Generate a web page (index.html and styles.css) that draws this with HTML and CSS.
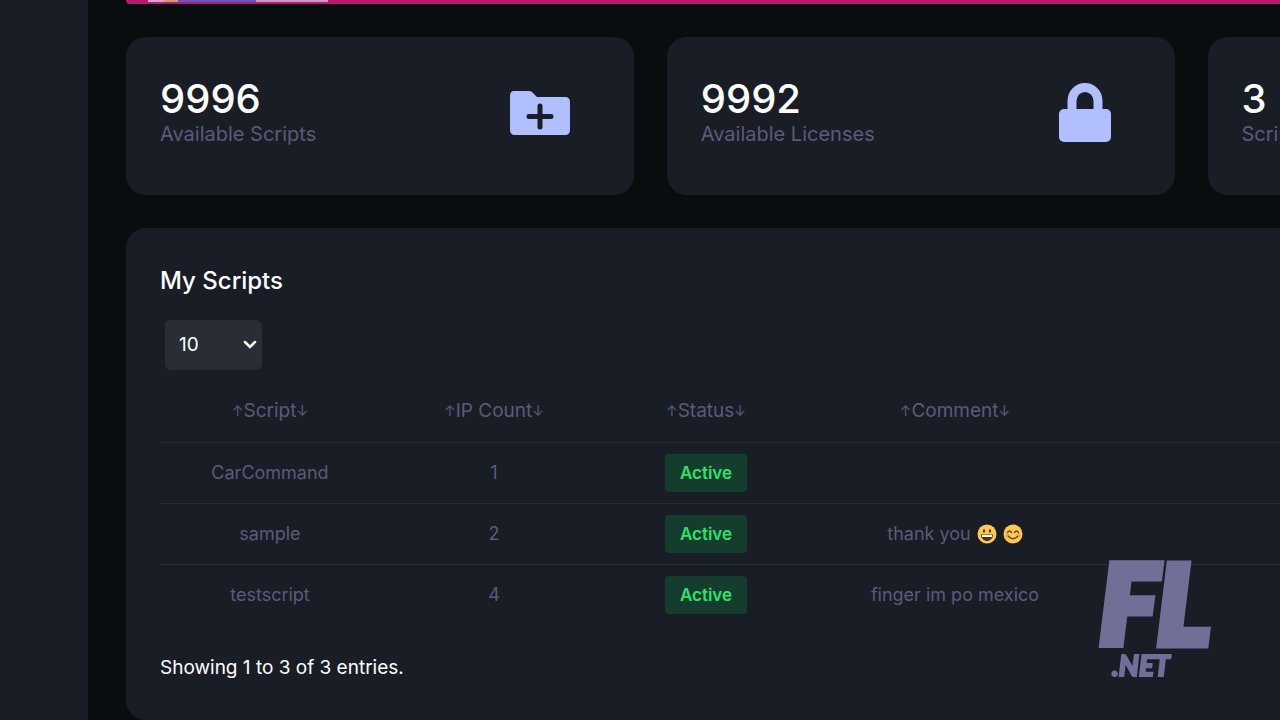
FILE: index.html
```html
<!DOCTYPE html>
<html lang="en">
<head>
<meta charset="utf-8">
<title>My Scripts</title>
<link rel="stylesheet" href="styles.css">
</head>
<body>
<div class="app">
  <aside class="sidebar"></aside>
  <main class="content">
    <div class="banner"><span class="bar bar-light"></span><span class="bar bar-gold"></span><span class="bar bar-violet"></span><span class="bar bar-pale"></span></div>
    <section class="stats">
      <article class="stat">
        <div><div class="stat-value">9996</div><div class="stat-label">Available Scripts</div></div>
        <svg class="stat-icon" viewBox="0 0 72 72" aria-hidden="true"><path fill="#b1bfff" d="M10 14h15q2 0 3 1l5 5h28q5 0 5 5v28q0 5-5 5H11q-5 0-5-5V19q0-5 4-5z"/><path d="M36 29v21M25 39.500h22" stroke="#191d26" stroke-width="5" stroke-linecap="round"/></svg>
      </article>
      <article class="stat">
        <div><div class="stat-value">9992</div><div class="stat-label">Available Licenses</div></div>
        <svg class="stat-icon" viewBox="0 0 72 72" aria-hidden="true"><path d="M27 34V24a13 13.500 0 0 1 26 0v10" fill="none" stroke="#b1bfff" stroke-width="9"/><rect x="14" y="32" width="52" height="33" rx="5" fill="#b1bfff"/></svg>
      </article>
      <article class="stat">
        <div><div class="stat-value">3</div><div class="stat-label">Scripts</div></div>
      </article>
    </section>
    <section class="panel">
      <h1 class="panel-title">My Scripts</h1>
      <div class="page-size">
        <select class="page-select" aria-label="Entries per page"><option>10</option><option>25</option><option>50</option></select>
        <svg class="chevron" viewBox="0 0 14 10" aria-hidden="true"><path d="M2 2l5 5 5-5" fill="none" stroke="#fff" stroke-width="2.500" stroke-linecap="round"/></svg>
      </div>
      <table class="scripts">
        <colgroup><col class="col-script"><col class="col-ip"><col class="col-status"><col class="col-comment"><col></colgroup>
        <thead><tr>
          <th><span class="arrow">↑</span>Script<span class="arrow">↓</span></th>
          <th><span class="arrow">↑</span>IP Count<span class="arrow">↓</span></th>
          <th><span class="arrow">↑</span>Status<span class="arrow">↓</span></th>
          <th><span class="arrow">↑</span>Comment<span class="arrow">↓</span></th>
          <th></th>
        </tr></thead>
        <tbody>
          <tr><td>CarCommand</td><td>1</td><td><span class="badge">Active</span></td><td></td><td></td></tr>
          <tr><td>sample</td><td>2</td><td><span class="badge">Active</span></td><td><span class="note">thank you
            <svg class="emoji" viewBox="0 0 20 20" role="img" aria-label="grinning face"><circle cx="10" cy="10" r="9.500" fill="#fdc94f"/><ellipse cx="7" cy="7" rx="1.200" ry="1.800" fill="#4b3520"/><ellipse cx="13" cy="7" rx="1.200" ry="1.800" fill="#4b3520"/><path d="M4 10.500h12c0 4-3 6.500-6 6.500s-6-2.500-6-6.500z" fill="#51301f"/><path d="M5 11h10v2H5z" fill="#fff"/></svg>
            <svg class="emoji" viewBox="0 0 20 20" role="img" aria-label="smiling face"><circle cx="10" cy="10" r="9.500" fill="#fdc94f"/><circle cx="4.500" cy="11.500" r="2" fill="#f4a148"/><circle cx="15.500" cy="11.500" r="2" fill="#f4a148"/><path d="M4.500 8.500q2-3 4 0M11.500 8.500q2-3 4 0M5.500 12.500q4.500 4.500 9 0" fill="none" stroke="#6b431f" stroke-width="1.400" stroke-linecap="round"/></svg></span></td><td></td></tr>
          <tr><td>testscript</td><td>4</td><td><span class="badge">Active</span></td><td>finger im po mexico</td><td></td></tr>
        </tbody>
      </table>
      <p class="summary">Showing 1 to 3 of 3 entries.</p>
    </section>
  </main>
</div>
<div class="brand"><span class="brand-main">FL</span><span class="brand-sub">.NET</span></div>
</body>
</html>
```
FILE: styles.css
```css
* { box-sizing: border-box; }
body {
  margin: 0;
  background: #0a0d10;
  color: #fff;
  font-family: Inter, "Liberation Sans", sans-serif;
  font-size: 19px;
  line-height: 24px;
  overflow: hidden;
}
.app { display: flex; min-height: 100vh; }
.sidebar { flex: 0 0 88px; background: #191d26; }
.content { flex: 1; min-width: 0; padding-left: 38px; overflow: hidden; display: flex; flex-direction: column; }
.banner {
  height: 4px;
  padding-left: 22px;
  background: #b51a6c;
  border-radius: 0 0 0 4px;
  display: flex;
  flex-shrink: 0;
}
.bar { height: 2px; }
.bar-light { width: 16px; background: #d4a5d0; }
.bar-gold { width: 14px; background: #d39a76; }
.bar-violet { width: 78px; background: #6856bb; }
.bar-pale { width: 72px; background: #ce99c5; }
.stats {
  display: grid;
  grid-auto-flow: column;
  grid-auto-columns: 44%;
  gap: 33px;
  margin-top: 33px;
}
.stat {
  display: flex;
  justify-content: space-between;
  align-items: flex-start;
  padding: 40px 58px 46px 34px;
  border-radius: 20px;
  background: #191d26;
}
.stat-value { font-size: 40px; line-height: 44px; font-weight: 500; }
.stat-label { color: #5b5b78; font-size: 20px; line-height: 26px; white-space: nowrap; }
.stat-icon { width: 72px; height: 72px; }
.panel {
  flex: 1;
  margin-top: 33px;
  padding: 37px 0 36px 34px;
  border-radius: 20px 0 0 20px;
  background: #191d26;
}
.panel-title { margin: 0; font-size: 24px; line-height: 32px; font-weight: 500; }
.page-size { position: relative; width: 97px; margin: 23px 0 11px 5px; }
.page-select {
  display: block;
  width: 100%;
  height: 50px;
  padding: 0 14px;
  border: 0;
  border-radius: 6px;
  appearance: none;
  background: #292e36;
  color: #fff;
  font: inherit;
}
.chevron { position: absolute; right: 5px; top: 20px; width: 14px; height: 10px; pointer-events: none; }
.scripts { width: 100%; table-layout: fixed; border-collapse: collapse; color: #5b5b78; text-align: center; }
.col-script { width: 220px; }
.col-ip { width: 228px; }
.col-status { width: 196px; }
.col-comment { width: 302px; }
.scripts th, .scripts td { height: 61px; padding: 0; font-weight: 400; }
.scripts td { font-size: 18px; }
.scripts tbody tr { border-top: 1px solid #272b34; }
.arrow { font-size: 14px; vertical-align: 1px; }
.badge {
  display: inline-block;
  padding: 7px 15px;
  border-radius: 4px;
  background: #153d2e;
  color: #2be36b;
  font-size: 17px;
  font-weight: 600;
}
.note { display: inline-flex; align-items: center; gap: 6px; }
.emoji { width: 20px; height: 20px; }
.summary { margin: 31px 0 0; }
.brand {
  position: fixed;
  right: 70px;
  bottom: 44px;
  display: flex;
  flex-direction: column;
  color: #706f98;
  font-family: Lato, sans-serif;
  font-style: italic;
  font-weight: 900;
}
.brand-main { font-size: 108px; line-height: 104px; -webkit-text-stroke: 9px #706f98; }
.brand-sub { padding-left: 12px; font-size: 28px; line-height: 22px; -webkit-text-stroke: 2px #706f98; }
```
